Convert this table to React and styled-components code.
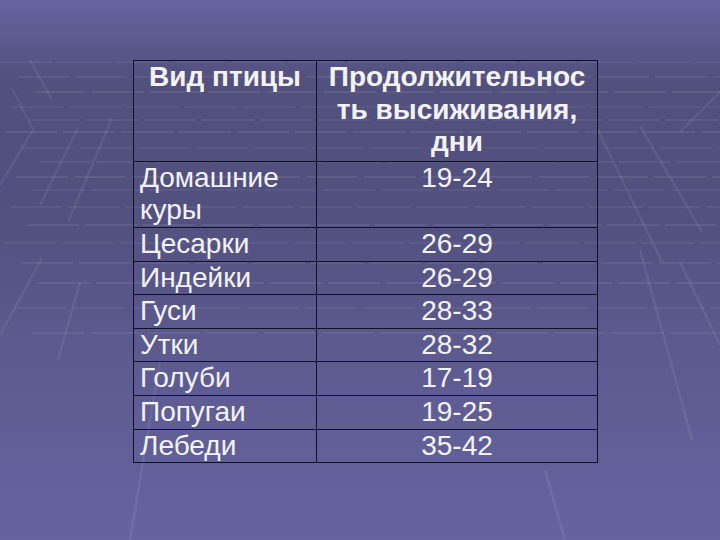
import React from 'react';
import styled, { createGlobalStyle } from 'styled-components';

const rows = [
  { bird: ['Домашние', 'куры'], days: '19-24' },
  { bird: ['Цесарки'], days: '26-29' },
  { bird: ['Индейки'], days: '26-29' },
  { bird: ['Гуси'], days: '28-33' },
  { bird: ['Утки'], days: '28-32' },
  { bird: ['Голуби'], days: '17-19' },
  { bird: ['Попугаи'], days: '19-25' },
  { bird: ['Лебеди'], days: '35-42' },
];

const hLines = [62, 77, 92, 107, 120, 132, 148, 162, 177, 190, 207, 225, 243, 263, 283, 308, 333];

const Backdrop = () => (
  <BackSvg viewBox="0 0 720 540" preserveAspectRatio="none">
    <g stroke="#ffffff" strokeWidth="1.2" strokeDasharray="52 6">
      {hLines.map((y, i) => (
        <line
          key={y}
          x1={(i * 17) % 40}
          y1={y}
          x2="720"
          y2={y}
          strokeOpacity={0.1 + (i % 3) * 0.025}
        />
      ))}
    </g>
    <g stroke="#ffffff" strokeOpacity="0.07" strokeWidth="2.5" fill="none">
      <line x1="30" y1="60" x2="52" y2="100" />
      <polyline points="12,88 33,130 0,185" />
      <line x1="112" y1="118" x2="68" y2="222" />
      <line x1="78" y1="128" x2="40" y2="205" />
      <line x1="42" y1="258" x2="0" y2="335" />
      <line x1="80" y1="282" x2="58" y2="360" />
      <line x1="597" y1="128" x2="662" y2="262" />
      <line x1="640" y1="126" x2="702" y2="232" />
      <line x1="720" y1="92" x2="680" y2="132" />
      <line x1="640" y1="250" x2="692" y2="440" />
      <line x1="680" y1="262" x2="720" y2="345" />
      <line x1="160" y1="360" x2="130" y2="540" />
      <line x1="545" y1="470" x2="565" y2="540" />
    </g>
  </BackSvg>
);

const App = () => {
  return (
    <Page>
      <GlobalStyle />
      <Backdrop />
      <Table>
        <thead>
          <tr>
            <HeadCell>Вид птицы</HeadCell>
            <HeadCell>
              Продолжительнос
              <br />
              ть высиживания,
              <br />
              дни
            </HeadCell>
          </tr>
        </thead>
        <tbody>
          {rows.map((row) => (
            <tr key={row.bird.join(' ')}>
              <NameCell>
                {row.bird.map((part, i) => (
                  <React.Fragment key={part}>
                    {i > 0 && <br />}
                    {part}
                  </React.Fragment>
                ))}
              </NameCell>
              <DaysCell>{row.days}</DaysCell>
            </tr>
          ))}
        </tbody>
      </Table>
    </Page>
  );
};

export default App;

const GlobalStyle = createGlobalStyle`
  html, body {
    margin: 0;
    padding: 0;
  }
`;

const Page = styled.div`
  position: relative;
  width: 720px;
  height: 540px;
  overflow: hidden;
  box-sizing: border-box;
  padding: 60px 0 0 133px;
  background: linear-gradient(
    180deg,
    #6664a0 0%,
    #5f5d94 5%,
    #52507d 15%,
    #52507e 38%,
    #5b598d 62%,
    #6664a0 100%
  );
  font-family: 'Liberation Sans', Arial, sans-serif;
  color: #f2f2f7;
`;

const BackSvg = styled.svg`
  position: absolute;
  inset: 0;
  width: 720px;
  height: 540px;
`;

const Table = styled.table`
  position: relative;
  border-collapse: collapse;
  width: 465px;
  table-layout: fixed;
  font-size: 28px;
  line-height: 32.6px;

  td,
  th {
    border: 1px solid #101028;
    padding: 0 6px;
    vertical-align: top;
  }

  td:first-child,
  th:first-child {
    width: 170px;
  }
`;

const HeadCell = styled.th`
  font-weight: bold;
  text-align: center;
  padding-bottom: 2px !important;
  white-space: nowrap;
`;

const NameCell = styled.td`
  text-align: left;
  font-weight: normal;
`;

const DaysCell = styled.td`
  text-align: center;
`;
